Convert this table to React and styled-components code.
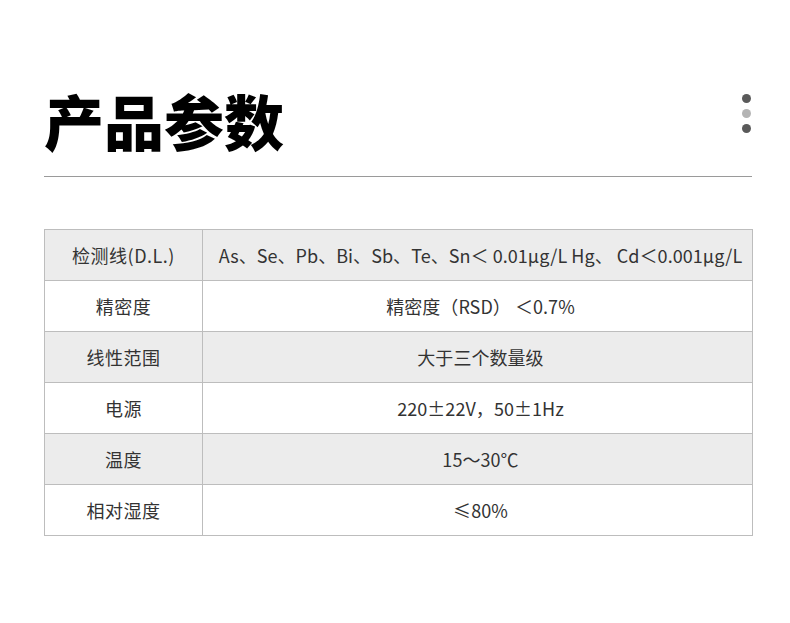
import styled, { createGlobalStyle } from 'styled-components'

const GlobalStyle = createGlobalStyle`
  html, body {
    margin: 0;
    padding: 0;
    background: #ffffff;
  }
  body {
    font-family: 'Noto Sans CJK SC', 'Noto Sans', sans-serif;
    color: #333333;
  }
`

const rows = [
  ['检测线(D.L.)', 'As、Se、Pb、Bi、Sb、Te、Sn＜ 0.01μg/L Hg、 Cd＜0.001μg/L'],
  ['精密度', '精密度（RSD） ＜0.7%'],
  ['线性范围', '大于三个数量级'],
  ['电源', '220±22V，50±1Hz'],
  ['温度', '15～30℃'],
  ['相对湿度', '≤80%'],
]

const App = () => {
  return (
    <Page>
      <GlobalStyle />
      <Header>
        <Title>产品参数</Title>
        <Dots>
          <Dot shade={'#5a5a5a'} />
          <Dot shade={'#b4b4b4'} />
          <Dot shade={'#5a5a5a'} />
        </Dots>
      </Header>
      <Rule />

      <Table>
        <tbody>
          {rows.map(([label, value], i) => (
            <Row key={label} $striped={i % 2 === 0}>
              <LabelCell>{label}</LabelCell>
              <ValueCell>{value}</ValueCell>
            </Row>
          ))}
        </tbody>
      </Table>
    </Page>
  )
}

export default App

const Page = styled.div`
  width: 790px;
  height: 623px;
  padding: 0 38px 0 44px;
  box-sizing: border-box;
  overflow: hidden;
`

const Header = styled.div`
  display: flex;
  justify-content: space-between;
  align-items: flex-start;
  padding-top: 81px;
  height: 95px;
`

const Title = styled.h1`
  margin: 0;
  font-family: 'Noto Sans CJK SC', sans-serif;
  font-weight: 900;
  font-size: 60px;
  line-height: 78px;
  color: #000000;
`

const Dots = styled.div`
  display: flex;
  flex-direction: column;
  gap: 6px;
  padding-top: 13px;
  margin-right: 1px;
`

const Dot = styled.span`
  display: block;
  width: 9px;
  height: 9px;
  border-radius: 50%;
  background: ${p => p.shade};
`

const Rule = styled.div`
  width: 708px;
  height: 1px;
  background: #9a9a9a;
`

const Table = styled.table`
  margin-top: 52px;
  width: 709px;
  border-collapse: collapse;
  table-layout: fixed;
  font-size: 18px;
  color: #333333;
`

const Row = styled.tr`
  height: 51px;
  background: ${p => (p.$striped ? '#ececec' : '#ffffff')};
`

const LabelCell = styled.td`
  width: 157px;
  border: 1px solid #bdbdbd;
  text-align: center;
  padding: 0;
  letter-spacing: 0.5px;
  white-space: nowrap;
`

const ValueCell = styled.td`
  border: 1px solid #bdbdbd;
  text-align: center;
  padding: 0 0 0 6px;
  letter-spacing: 0.05px;
  white-space: nowrap;
`
